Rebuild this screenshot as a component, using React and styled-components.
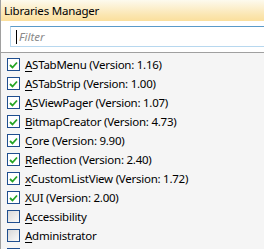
import React from "react";
import styled, { createGlobalStyle } from "styled-components";

const GlobalStyle = createGlobalStyle`
  html, body {
    margin: 0;
    padding: 0;
    background: #f5f5f5;
  }
  body {
    font-family: "Noto Sans", "Open Sans", sans-serif;
    overflow: hidden;
  }
`;

const LIBRARIES = [
  { name: "ASTabMenu", version: "1.16", checked: true },
  { name: "ASTabStrip", version: "1.00", checked: true },
  { name: "ASViewPager", version: "1.07", checked: true },
  { name: "BitmapCreator", version: "4.73", checked: true },
  { name: "Core", version: "9.90", checked: true },
  { name: "Reflection", version: "2.40", checked: true },
  { name: "xCustomListView", version: "1.72", checked: true },
  { name: "XUI", version: "2.00", checked: true },
  { name: "Accessibility", checked: false },
  { name: "Administrator", checked: false },
  { name: "AHLocale", checked: false },
];

const Panel = styled.div`
  width: 264px;
  height: 249px;
  display: flex;
  flex-direction: column;
  overflow: hidden;
  border-left: 1px solid #a0a0a0;
  box-sizing: border-box;
`;

const Header = styled.div`
  height: 21px;
  display: flex;
  align-items: center;
  padding-left: 3px;
  font-size: 11.5px;
  letter-spacing: -0.2px;
  color: #000;
  background: linear-gradient(#fdfaee, #fbe6b2 70%, #fbdf9c);
  flex-shrink: 0;
`;

const FilterArea = styled.div`
  height: 31px;
  background: #fff;
  display: flex;
  align-items: center;
  padding-left: 9px;
  border-bottom: 1px solid #a0a0a0;
  flex-shrink: 0;
`;

const FilterBox = styled.div`
  flex: 1;
  height: 19px;
  border-top: 1px solid #5a9ac9;
  border-bottom: 1px solid #b8d8ef;
  border-left: 1px solid #b8d8ef;
  display: flex;
  align-items: center;
  padding-left: 5px;
  font-size: 11.5px;
  font-style: italic;
  color: #8a8a8a;
`;

const Caret = styled.span`
  width: 1px;
  height: 14px;
  background: #000;
  margin-right: 2px;
`;

const List = styled.div`
  flex: 1;
  background: #f5f5f5;
  padding-top: 2px;
`;

const Row = styled.div`
  height: 19px;
  display: flex;
  align-items: center;
  padding-left: 6px;
  font-size: 11.5px;
  letter-spacing: -0.25px;
  color: #000;
  white-space: nowrap;
`;

const Box = styled.span`
  width: 11px;
  height: 11px;
  border: 1px solid #1f4e8f;
  background: ${(p) =>
    p.$checked ? "#fff" : "linear-gradient(135deg, #d8d8d8, #fafafa)"};
  display: flex;
  align-items: center;
  justify-content: center;
  margin-right: 5px;
  flex-shrink: 0;
`;

const Mnemonic = styled.span`
  text-decoration: underline;
  text-underline-offset: 2px;
`;

const Check = () => (
  <svg width="9" height="8" viewBox="0 0 9 8">
    <path d="M1 4 L3.5 6.5 L8 1.5" fill="none" stroke="#25a525" strokeWidth="1.8" />
  </svg>
);

const LibraryRow = ({ lib }) => (
  <Row>
    <Box $checked={lib.checked}>{lib.checked && <Check />}</Box>
    <span>
      <Mnemonic>{lib.name[0]}</Mnemonic>
      {lib.name.slice(1)}
      {lib.version && ` (Version: ${lib.version})`}
    </span>
  </Row>
);

const App = () => (
  <>
    <GlobalStyle />
    <Panel>
      <Header>Libraries Manager</Header>
      <FilterArea>
        <FilterBox>
          <Caret />
          Filter
        </FilterBox>
      </FilterArea>
      <List>
        {LIBRARIES.map((lib) => (
          <LibraryRow key={lib.name} lib={lib} />
        ))}
      </List>
    </Panel>
  </>
);

export default App;
